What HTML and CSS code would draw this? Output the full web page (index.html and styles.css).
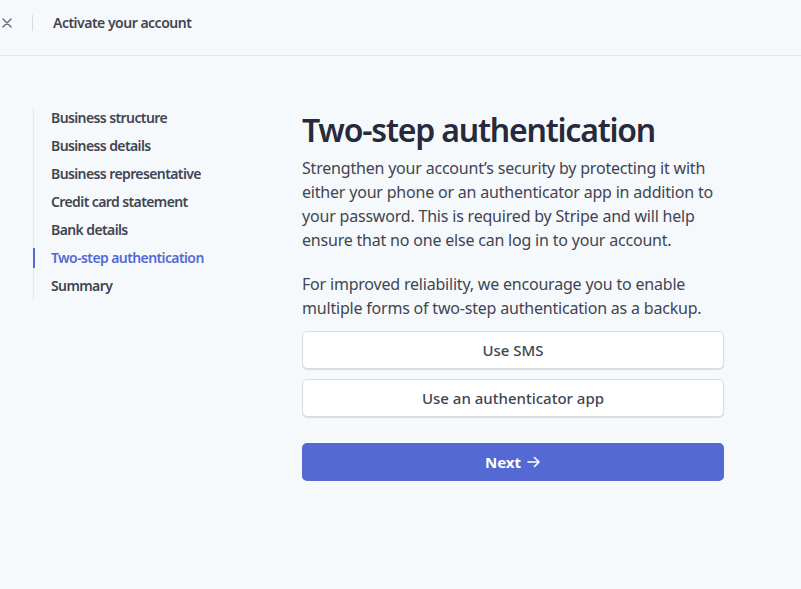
FILE: index.html
```html
<!DOCTYPE html>
<html lang="en">
<head>
  <meta charset="UTF-8" />
  <meta name="viewport" content="width=device-width, initial-scale=1.0"/>
  <title>Activate your account</title>
  <link rel="stylesheet" href="styles.css">
</head>
<body>
  <header class="topbar">
    <button class="close" aria-label="Close">
      <svg width="10" height="10" viewBox="0 0 10 10"><path d="M1 1L9 9M9 1L1 9" stroke="#6b7385" stroke-width="1.6" stroke-linecap="round"/></svg>
    </button>
    <span class="divider"></span>
    <span class="topbar-title">Activate your account</span>
  </header>

  <main class="layout">
    <nav class="steps">
      <a class="step">Business structure</a>
      <a class="step">Business details</a>
      <a class="step">Business representative</a>
      <a class="step">Credit card statement</a>
      <a class="step">Bank details</a>
      <a class="step active">Two-step authentication</a>
      <a class="step">Summary</a>
    </nav>

    <section class="content">
      <h1>Two-step authentication</h1>
      <p>Strengthen your account’s security by protecting it with either your phone or an authenticator app in addition to your password. This is required by Stripe and will help ensure that no one else can log in to your account.</p>
      <p class="second">For improved reliability, we encourage you to enable multiple forms of two-step authentication as a backup.</p>

      <div class="options">
        <button class="option">Use SMS</button>
        <button class="option">Use an authenticator app</button>
      </div>

      <button class="next">Next
        <svg width="14" height="12" viewBox="0 0 14 12"><path d="M1 6H12M7.5 1.5L12 6L7.5 10.5" fill="none" stroke="#fff" stroke-width="1.6" stroke-linecap="round" stroke-linejoin="round"/></svg>
      </button>
    </section>
  </main>
</body>
</html>
```

FILE: styles.css
```css
:root {
  --primary: #5469d4;
  --bg: #f6f9fc;
  --text: #30313d;
  --muted: #414552;
  --line: #e3e8ee;
}
* {
  box-sizing: border-box;
}
body {
  margin: 0;
  font-family: 'Noto Sans', 'Open Sans', sans-serif;
  background-color: var(--bg);
  color: var(--text);
}
.topbar {
  height: 56px;
  display: flex;
  align-items: center;
  border-bottom: 1px solid var(--line);
  padding-bottom: 10px;
}
.close {
  border: none;
  background: none;
  padding: 0 0 0 2px;
  width: 13px;
  display: flex;
  cursor: pointer;
}
.divider {
  width: 1px;
  height: 16px;
  background-color: #d5dbe1;
  margin-left: 19px;
}
.topbar-title {
  margin-left: 20px;
  font-size: 14px;
  font-weight: 600;
  letter-spacing: -0.5px;
  color: var(--muted);
}
.layout {
  display: flex;
  padding-top: 52px;
}
.steps {
  display: flex;
  flex-direction: column;
  margin-left: 33px;
  width: 269px;
  align-self: flex-start;
  border-left: 1px solid var(--line);
  padding: 0;
}
.step {
  font-size: 14px;
  font-weight: 600;
  letter-spacing: -0.6px;
  line-height: 20px;
  padding: 4px 0 4px 17px;
  color: var(--muted);
}
.step:first-child {
  margin-top: -4px;
}
.step.active {
  color: var(--primary);
  position: relative;
}
.step.active::before {
  content: "";
  position: absolute;
  left: -1px;
  top: 4px;
  bottom: 4px;
  width: 2px;
  background-color: var(--primary);
}
.content {
  width: 422px;
}
h1 {
  margin: 0 0 4px 0;
  font-size: 32px;
  line-height: 44px;
  font-weight: 600;
  letter-spacing: -1.2px;
  color: #262a3b;
}
p {
  margin: 0;
  font-size: 16px;
  line-height: 24px;
  letter-spacing: -0.2px;
  color: var(--muted);
}
p.second {
  margin-top: 20px;
}
.options {
  margin-top: 11px;
  display: flex;
  flex-direction: column;
  gap: 10px;
}
.option {
  height: 38px;
  width: 100%;
  background-color: #fff;
  border: 1px solid #d9dde3;
  border-radius: 5px;
  box-shadow: 0 1px 1px rgba(0,0,0,0.12);
  font-family: inherit;
  font-size: 15px;
  font-weight: 500;
  color: var(--muted);
  cursor: pointer;
}
.next {
  margin-top: 26px;
  width: 100%;
  height: 38px;
  border: none;
  border-radius: 5px;
  background-color: var(--primary);
  color: #fff;
  font-family: inherit;
  font-size: 15px;
  font-weight: 700;
  display: flex;
  align-items: center;
  justify-content: center;
  gap: 6px;
  cursor: pointer;
}
```
